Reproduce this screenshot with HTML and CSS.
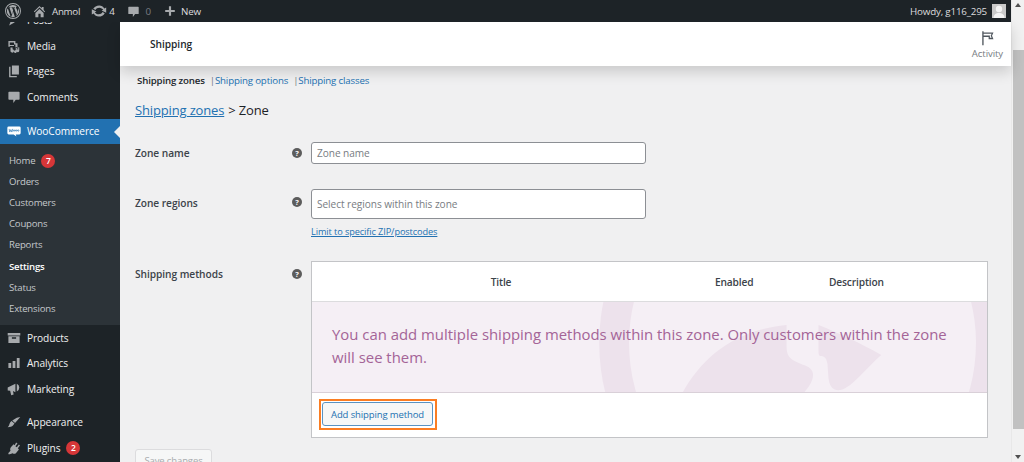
FILE: index.html
```html
<!DOCTYPE html>
<html lang="en">
<head>
<meta charset="utf-8">
<title>Shipping zones</title>
<link rel="stylesheet" href="styles.css">
</head>
<body>
<div class="window">
  <div class="page">
    <header class="adminbar">
      <svg class="ab-wp" viewBox="0 0 20 20"><path d="M10 0a10 10 0 1 0 0 20 10 10 0 0 0 0-20zm0 1.2a8.8 8.8 0 1 1 0 17.6 8.8 8.8 0 0 1 0-17.6z"/><path d="M3 7.2a7.5 7.5 0 0 0 4.100 9.900L3.700 7.200zM15.200 9.800c0-1-.4-1.600-.7-2.200-.4-.7-.8-1.200-.8-1.900 0-.7.5-1.400 1.300-1.400h.1A7.500 7.500 0 0 0 4 5.500h.5c.8 0 2-.1 2-.1.400 0 .5.600.1.600l-.9.100 2.800 8.300 1.700-5-1.200-3.300-.8-.1c-.4 0-.3-.6.100-.6 0 0 1.200.1 2 .1s2-.1 2-.1c.4 0 .5.600.1.600l-.9.100 2.800 8.200.8-2.500c.3-1 .6-1.700.6-2.400zM10.100 10.700l-2.300 6.700a7.500 7.500 0 0 0 4.600-.1l-.1-.1-2.200-6.500zM16.700 6.300l.1.800c0 .8-.1 1.600-.6 2.800l-2.300 6.600a7.500 7.500 0 0 0 2.800-10.200z"/></svg>
      <svg class="ab-home" viewBox="0 0 20 20"><path d="M16 8.500l1.500 1.500-1 1L10 4.500 3.500 11l-1-1L10 2.500l3 3V4h2.500v3.500zM10 6.500l5.500 5.500v5.500H11.500V13h-3v4.500H4.500V12z"/></svg>
      <span class="ab-text ab-site">Anmol</span>
      <svg class="ab-update" viewBox="0 0 20 20"><path d="M10.300 3C13 3 15.400 4.500 16.600 6.800L19 5.600v6.600l-5.800-2.700 2-1C14.300 7 12.500 5.800 10.300 5.800c-2 0-3.800 1.100-4.700 2.800L2.800 7.300C4.200 4.700 7 3 10.300 3zM9.700 17C7 17 4.600 15.500 3.400 13.200L1 14.400V7.800l5.800 2.700-2 1c.9 1.500 2.700 2.700 4.900 2.700 2 0 3.800-1.100 4.700-2.800l2.800 1.300C15.800 15.300 13 17 9.700 17z"/></svg>
      <span class="ab-text ab-count">4</span>
      <svg class="ab-comment" viewBox="0 0 20 20"><path d="M3 2.500h14a1 1 0 0 1 1 1V13a1 1 0 0 1-1 1h-4.500L9 18.500V14H3a1 1 0 0 1-1-1V3.500a1 1 0 0 1 1-1z"/></svg>
      <span class="ab-text ab-dim">0</span>
      <svg class="ab-plus" viewBox="0 0 20 20"><path d="M8.200 2h3.600v6.200H18v3.600h-6.200V18H8.200v-6.200H2V8.200h6.200z"/></svg>
      <span class="ab-text ab-new">New</span>
      <span class="ab-text ab-howdy">Howdy, g116_295</span>
      <span class="ab-avatar"><svg viewBox="0 0 14 14"><circle cx="7" cy="5" r="3.200"/><path d="M1.500 14c0-3.500 2.500-5 5.500-5s5.500 1.500 5.500 5z"/></svg></span>
    </header>
    <div class="layout">
      <nav class="sidebar">
        <a class="item item-first"><svg class="mi" viewBox="0 0 20 20"><path d="M3 18l3-8 8-8 4 4-8 8z"/></svg>Posts</a>
        <a class="item"><svg class="mi" viewBox="0 0 20 20"><path d="M2 3h10v3h3v5.500a3 3 0 0 0-3 .5V8h-2v2H4v1H2zM4 5v3.500h6V5zM12.500 13l5-1.200v5a2 2 0 1 1-1.400-1.900v-1.700l-2.200.5V18a2 2 0 1 1-1.400-1.900zM5 12h3v2.500A2.500 2.500 0 1 1 5 16.500z"/></svg>Media</a>
        <a class="item"><svg class="mi" viewBox="0 0 20 20"><path d="M7 2h10v13H7zM5 4v13h9v2H3V4z"/></svg>Pages</a>
        <a class="item"><svg class="mi" viewBox="0 0 20 20"><path d="M3 2.500h14a1 1 0 0 1 1 1V13a1 1 0 0 1-1 1h-4.500L9 18.500V14H3a1 1 0 0 1-1-1V3.500a1 1 0 0 1 1-1z"/></svg>Comments</a>
        <a class="item item-woo"><svg class="mi woo-icon" viewBox="0 0 20 20"><path class="woo-bubble" d="M2.500 3.500h15a2 2 0 0 1 2 2v7.500a2 2 0 0 1-2 2h-5l1 3-4-3h-7a2 2 0 0 1-2-2V5.500a2 2 0 0 1 2-2z"/><path class="woo-mark" d="M3 7l1 4.500L5.500 8 7 11.500 8 7M10 8.500a1 1 0 1 0 .1 0zM13 8.500a1 1 0 1 0 .1 0zM16 8.500a1 1 0 1 0 .1 0z"/></svg>WooCommerce</a>
        <div class="submenu">
          <a class="sub">Home<span class="badge">7</span></a>
          <a class="sub">Orders</a>
          <a class="sub">Customers</a>
          <a class="sub">Coupons</a>
          <a class="sub">Reports</a>
          <a class="sub sub-current">Settings</a>
          <a class="sub">Status</a>
          <a class="sub">Extensions</a>
        </div>
        <a class="item"><svg class="mi" viewBox="0 0 20 20"><path d="M1 3h18v3.500H1zM2 7.500h16V17H2zM7 9v2h6V9z" fill-rule="evenodd"/></svg>Products</a>
        <a class="item"><svg class="mi" viewBox="0 0 20 20"><path d="M2 10h4v7H2zM8 7h4v10H8zM14 3h4v14h-4z"/></svg>Analytics</a>
        <a class="item"><svg class="mi" viewBox="0 0 20 20"><path d="M1 8l11-5.500v12L8.500 13l1 5-3.500 1-1.500-6.500L1 12zM14 2.500a6 6 0 0 1 0 11z"/></svg>Marketing</a>
        <a class="item item-gap"><svg class="mi" viewBox="0 0 20 20"><path d="M19 3l-7.500 8.500-4-3.500L14 4zM6.500 8.500l4.200 3.800-2.200 2.700c-1.500 1.500-4 2.500-7.500 2.500 2-1.500 2-3 2.500-4.500.5-2 1.500-3.500 3-4.500z"/></svg>Appearance</a>
        <a class="item"><svg class="mi" viewBox="0 0 20 20"><path d="M13 2l2 1.500-3 4 2 1.500 3-4 1.500 1.500-3 4 1.500 1.500-4 5a4 4 0 0 1-5 .5L4 19H2v-2l3-3a4.500 4.500 0 0 1 .5-5l4-4.500 1.500 1.500z"/></svg>Plugins<span class="badge">2</span></a>
      </nav>
      <main class="content">
        <div class="topbar">
          <h1 class="topbar-title">Shipping</h1>
          <div class="activity">
            <svg viewBox="0 0 20 20"><path d="M3 19.500V1h1.800v1.500H18l-2 4.500 2 4.500h-6.500V8.500H4.800v11zM4.800 4.200v2.600h8.400v3h2.300L14.200 7l1.300-2.800z"/></svg>
            <span>Activity</span>
          </div>
        </div>
        <div class="wrap">
          <div class="tabs">
            <b>Shipping zones</b><i class="sep">|</i><a>Shipping options</a><i class="sep">|</i><a>Shipping classes</a>
          </div>
          <h2 class="crumb"><a>Shipping zones</a> &gt; Zone</h2>
          <div class="row row-name">
            <span class="label">Zone name</span>
            <span class="help">?</span>
            <div class="field"><div class="input input-short">Zone name</div></div>
          </div>
          <div class="row row-regions">
            <span class="label">Zone regions</span>
            <span class="help">?</span>
            <div class="field">
              <div class="input input-tall">Select regions within this zone</div>
              <a class="limit">Limit to specific ZIP/postcodes</a>
            </div>
          </div>
          <div class="row row-methods">
            <span class="label">Shipping methods</span>
            <span class="help">?</span>
            <div class="table">
              <div class="thead"><span class="th-title">Title</span><span class="th-enabled">Enabled</span><span class="th-desc">Description</span></div>
              <div class="blank">
                <svg class="watermark" viewBox="0 0 677 90" preserveAspectRatio="none"><path d="M492 -163a204 204 0 1 0 .1 0zM492 -133a174 174 0 1 1-.1 0z" fill-rule="evenodd"/><path d="M372 90c20-35 52-62 104-67v22c0 8 3 12 10 15 8 4 14 4 16 10 2 6-2 13-8 20zM508 23c20 8 42 18 63 30-14 12-30 33-41 35-8 1-11-4-12-12l-1-14c-1-6-3-8-7-8-2 0-2-3-2-6z"/></svg>
                <p>You can add multiple shipping methods within this zone. Only customers within the zone will see them.</p>
              </div>
              <div class="tfoot"><div class="highlight"><button class="add" type="button">Add shipping method</button></div></div>
            </div>
          </div>
          <button class="save" type="button">Save changes</button>
        </div>
      </main>
    </div>
  </div>
  <div class="scrollbar">
    <span class="sb-up"></span>
    <span class="sb-thumb"></span>
    <span class="sb-down"></span>
  </div>
</div>
</body>
</html>
```
FILE: styles.css
```css
* { box-sizing: border-box; }
html, body { margin: 0; height: 100%; overflow: hidden; }
body { font-family: "Open Sans", "Noto Sans", sans-serif; font-size: 10px; color: #3c434a; background: #f0f0f1; }
a { cursor: pointer; }

.window { display: flex; width: 1024px; height: 462px; overflow: hidden; }
.page { flex: 1; min-width: 0; display: flex; flex-direction: column; }

/* Scrollbar */
.scrollbar { width: 13px; flex: none; background: #f1f1f1; display: flex; flex-direction: column; align-items: center; border-left: 1px solid #e8e8e8; }
.sb-up { margin-top: 3px; border: 3px solid transparent; border-top: 0; border-bottom: 4px solid #505050; }
.sb-thumb { margin-top: 43px; width: 11px; height: 379px; background: #c1c1c1; }
.sb-down { margin-top: 26px; border: 3px solid transparent; border-bottom: 0; border-top: 4px solid #505050; }

/* Admin bar */
.adminbar { height: 22px; flex: none; background: #1d2327; display: flex; align-items: center; color: #c3c4c7; position: relative; z-index: 3; }
.adminbar svg { fill: #a7aaad; flex: none; }
.ab-wp { width: 16px; height: 16px; margin-left: 5px; }
.ab-home { width: 15px; height: 15px; margin-left: 11px; }
.ab-text { font-size: 9.800px; letter-spacing: -.2px; color: #dcdcde; }
.ab-site { margin-left: 5px; letter-spacing: -.3px; }
.ab-update { width: 16px; height: 16px; margin-left: 11px; }
.ab-count { margin-left: 2px; }
.ab-comment { width: 13px; height: 13px; margin-left: 12px; }
.ab-dim { margin-left: 6px; color: #787c82; }
.ab-plus { width: 12px; height: 12px; margin-left: 13px; }
.ab-new { margin-left: 5px; }
.ab-howdy { margin-left: auto; }
.ab-avatar { width: 14px; height: 14px; margin: 0 5px 0 5px; background: #c9c9c9; flex: none; display: flex; }
.adminbar .ab-avatar svg { fill: #f4f4f4; width: 14px; height: 14px; }

/* Layout */
.layout { flex: 1; min-height: 0; display: flex; }

/* Sidebar */
.sidebar { width: 120px; flex: none; background: #1d2327; overflow: hidden; }
.item { display: flex; align-items: center; height: 25.500px; font-size: 10.200px; letter-spacing: -.1px; color: #f0f0f1; white-space: nowrap; position: relative; }
.item-first { margin-top: -14.500px; }
.item-gap { margin-top: 8px; }
.item-woo { margin-top: 9px; background: #2271b1; color: #fff; }
.item-woo::after { content: ""; position: absolute; right: 0; top: 7px; border: 6px solid transparent; border-left: 0; border-right-color: #f0f0f1; }
.mi { width: 14px; height: 14px; margin: 0 6px 0 7px; fill: #a7aaad; flex: none; }
.woo-icon .woo-bubble { fill: #fff; }
.woo-icon .woo-mark { fill: none; stroke: #2271b1; stroke-width: .9; }
.submenu { background: #2c3338; padding: 6px 0 6px; }
.sub { display: flex; align-items: center; height: 21.100px; padding-left: 9px; font-size: 9.600px; letter-spacing: -.2px; color: #c5c9cc; }
.sub-current { color: #fff; font-weight: 600; }
.badge { width: 14px; height: 14px; border-radius: 50%; background: #d63638; color: #fff; font-size: 8.500px; font-weight: 600; display: inline-flex; align-items: center; justify-content: center; margin-left: 6px; letter-spacing: 0; }

/* Content */
.content { flex: 1; min-width: 0; display: flex; flex-direction: column; }
.topbar { height: 44px; flex: none; background: #fff; display: flex; align-items: center; justify-content: space-between; padding: 0 8px 0 30px; box-shadow: 0 6px 14px rgba(0,0,0,.16); position: relative; z-index: 1; }
.topbar-title { margin: 0; font-size: 10.200px; font-weight: 600; color: #23282d; letter-spacing: -.05px; }
.activity { display: flex; flex-direction: column; align-items: center; color: #787c82; font-size: 9.600px; letter-spacing: -.1px; }
.activity svg { width: 15px; height: 16px; fill: #50575e; margin-top: 1px; margin-bottom: 1px; }
.wrap { padding: 0 23px 0 15px; }

.tabs { height: 28px; display: flex; align-items: center; padding-left: 2px; font-size: 9.700px; letter-spacing: -.16px; color: #2271b1; }
.tabs b { color: #23282d; font-weight: 600; }
.tabs a { color: #2271b1; letter-spacing: -.16px; }
.sep { font-style: normal; color: #787c82; margin: 0 0 0 5px; }
.crumb { margin: 0; height: 32px; display: flex; align-items: center; gap: 4px; font-size: 13px; font-weight: 500; color: #1d2327; letter-spacing: -.15px; }
.crumb a { color: #2271b1; text-decoration: underline; }

.row { display: grid; grid-template-columns: 148px 10px 1fr; column-gap: 9px; align-items: start; }
.label { font-size: 10.200px; font-weight: 600; line-height: 14px; color: #3c434a; letter-spacing: -.06px; }
.help { width: 10px; height: 10px; border-radius: 50%; background: #5c5c5c; color: #fff; font-size: 7.500px; font-weight: 700; line-height: 10px; text-align: center; }
.row-name { margin-top: 16px; }
.row-name .label { margin-top: 4px; }
.row-name .help { margin-top: 6px; }
.row-regions { margin-top: 25px; }
.row-regions .label { margin-top: 7px; }
.row-regions .help { margin-top: 8px; }
.row-methods { margin-top: 22px; }
.row-methods .label { margin-top: 6px; }
.row-methods .help { margin-top: 8px; }

.input { width: 335px; background: #fff; border: 1px solid #8c8f94; border-radius: 3px; padding: 0 5px; display: flex; align-items: center; font-size: 10.100px; color: #787c82; letter-spacing: -.05px; }
.input-short { height: 22px; }
.input-tall { height: 30px; }
.limit { display: block; margin-top: 6px; line-height: 14px; font-size: 9.200px; letter-spacing: -.1px; color: #2271b1; text-decoration: underline; }

.table { width: 677px; background: #fff; border: 1px solid #c3c4c7; }
.thead { height: 39px; display: grid; grid-template-columns: 378px 114px 1fr; align-items: center; font-size: 10.200px; font-weight: 600; color: #3c434a; letter-spacing: -.15px; border-bottom: 1px solid #dcdcde; box-sizing: content-box; }
.th-title { text-align: center; }
.th-enabled, .th-desc { padding-left: 25px; }
.blank { height: 90px; position: relative; background: #f5eff5; overflow: hidden; border-bottom: 1px solid #d9d0d8; box-sizing: content-box; }
.watermark { position: absolute; left: 0; top: 0; width: 100%; height: 100%; fill: #ede2ec; }
.blank p { position: relative; margin: 0; padding: 21px 20px 0 20px; font-size: 14.900px; line-height: 23px; color: #a46497; }
.tfoot { height: 44px; padding: 6px 7px; }
.highlight { width: 118px; height: 31px; border: 2px solid #fb7d22; padding: 1px; }
.add { display: block; width: 111px; height: 24px; margin: 0; padding: 0; border: 1px solid #5a93c2; border-radius: 3px; background: #f6f7f7; color: #2271b1; font: 9.500px "Open Sans", "Noto Sans", sans-serif; letter-spacing: -.12px; }
.save { display: block; margin-top: 11px; width: 77px; height: 22px; padding: 0; border: 1px solid #dcdcde; border-radius: 3px; background: #f6f7f7; color: #a7aaad; font: 9.500px "Open Sans", "Noto Sans", sans-serif; letter-spacing: -.12px; }
```
